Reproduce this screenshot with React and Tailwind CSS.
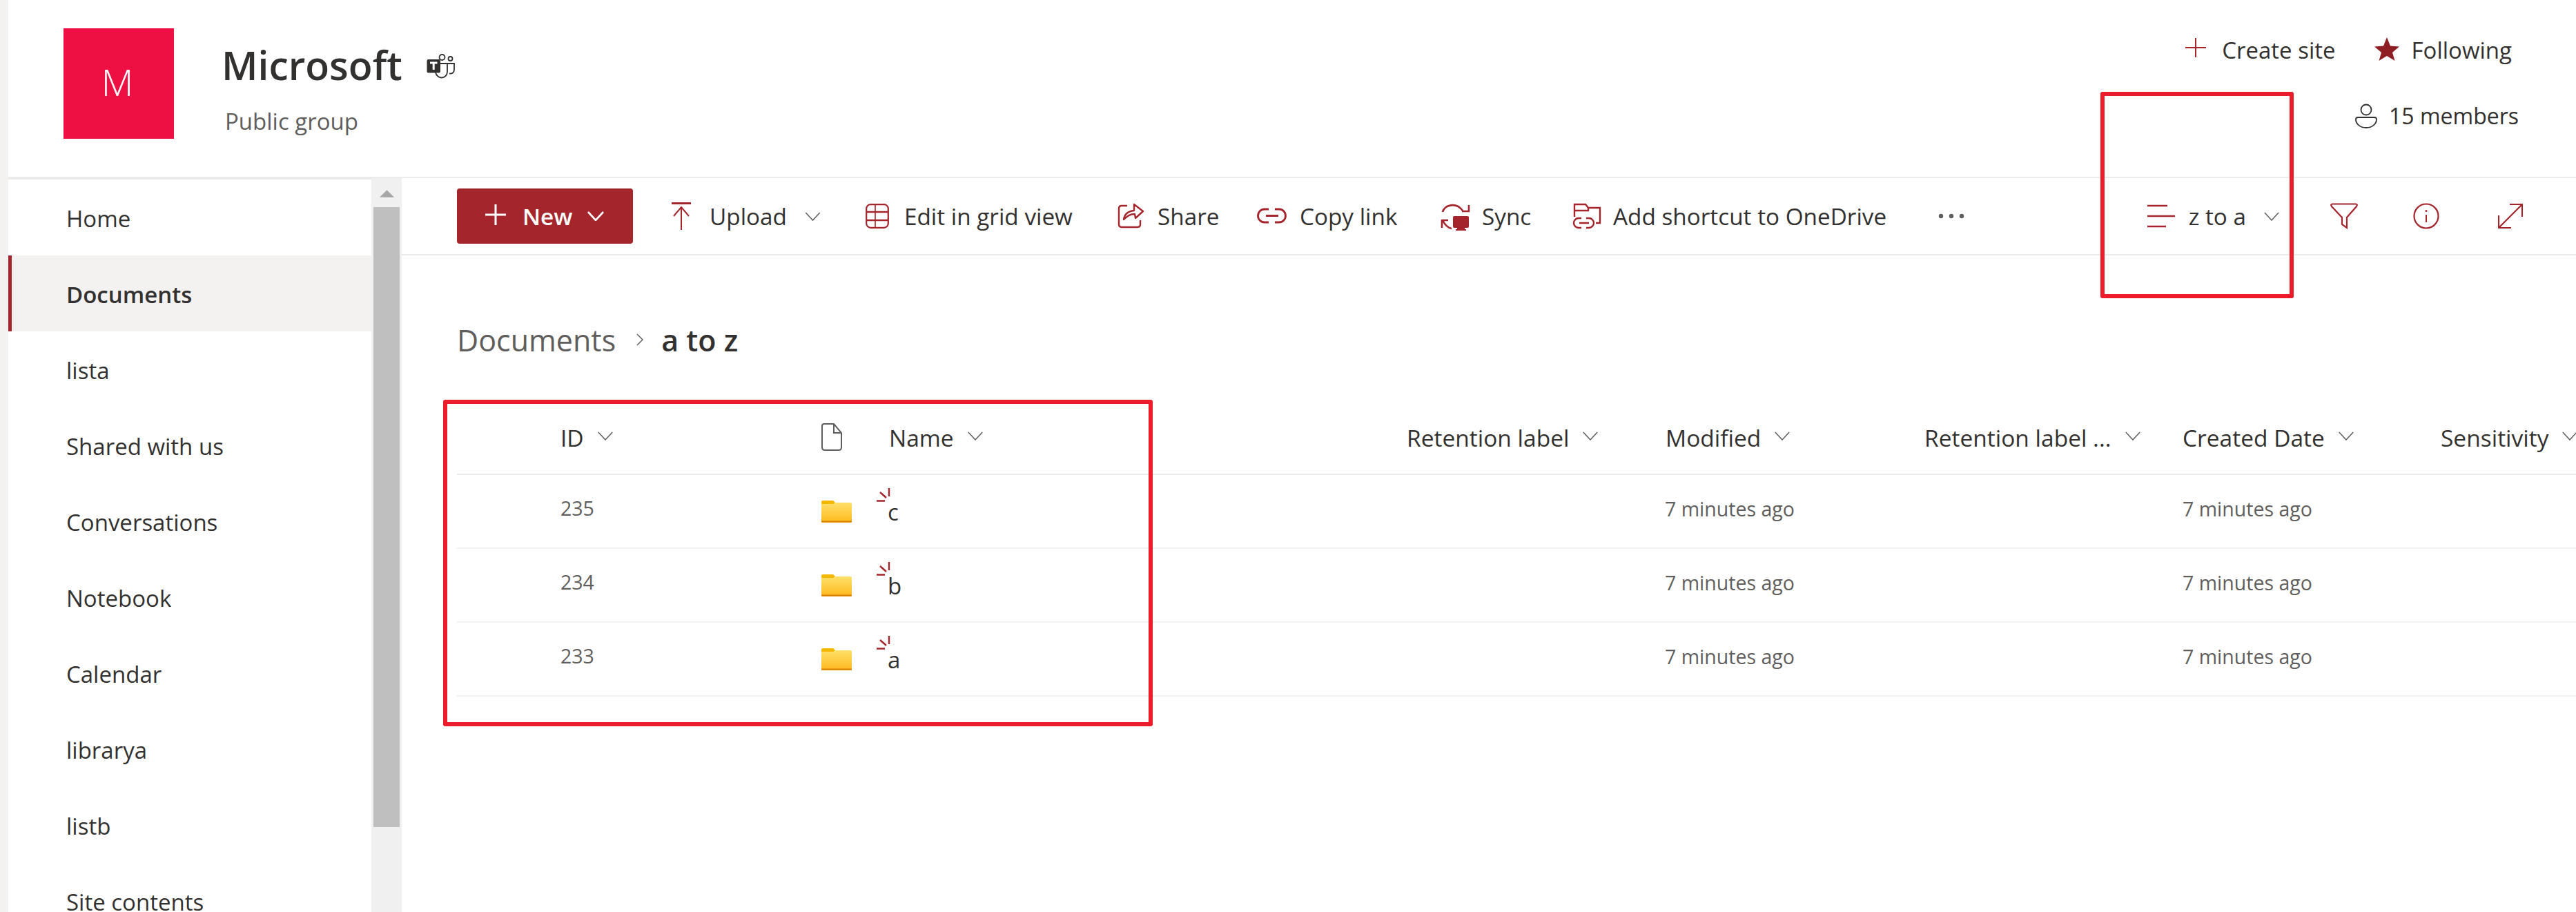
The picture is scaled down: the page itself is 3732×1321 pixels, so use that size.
import React from "react";

const RED = "#a4262c";

const Chevron = ({ className = "", color = "#605e5c", width = "1.6" }) => (
  <svg viewBox="0 0 24 14" className={className} fill="none" stroke={color} strokeWidth={width}>
    <path d="M1 1 L12 13 L23 1" />
  </svg>
);

const UploadIcon = () => (
  <svg viewBox="0 0 28 40" className="w-[28px] h-[40px] shrink-0" fill="none" stroke={RED} strokeWidth="2">
    <path d="M0 1.5 H28" strokeWidth="3" />
    <path d="M14 40 V7 M3 20 L14 7 L25 20" />
  </svg>
);
const GridIcon = () => (
  <svg viewBox="0 0 34 36" className="w-[34px] h-[36px] shrink-0" fill="none" stroke={RED} strokeWidth="2.2">
    <rect x="1.2" y="1.2" width="31.6" height="33.6" rx="6" />
    <path d="M1 12 H33 M1 24 H33" strokeWidth="2.6" />
    <path d="M14 1 V35" strokeWidth="1.6" />
  </svg>
);
const ShareIcon = () => (
  <svg viewBox="18 14 40 40" className="w-[40px] h-[40px] shrink-0" fill="none" stroke={RED} strokeWidth="2.4">
    <path d="M32 19 H24 Q20 19 20 23 V46 Q20 50 24 50 H47 Q51 50 51 46 V40" />
    <path d="M27 39 C28 31 33 27 42 26 V17 L55 27 L44 37 L43 31 C36 31 32 34 27 39 Z" strokeLinejoin="round" />
  </svg>
);
const LinkIcon = () => (
  <svg viewBox="222 18 44 28" className="w-[44px] h-[28px] shrink-0" fill="none" stroke={RED} strokeWidth="2.8">
    <path d="M239 22 H233 a9.5 9.5 0 0 0 0 19 H239 M248 22 H254 a9.5 9.5 0 0 1 0 19 H248 M235 31.5 H253" />
  </svg>
);
const SyncIcon = () => (
  <svg viewBox="16 12 44 42" className="w-[44px] h-[42px] shrink-0" fill="none" stroke={RED} strokeWidth="2.6">
    <path d="M19 27 C22 17 38 12 48 25 M57 17 V26 H47" />
    <path d="M18 38 V50 M18 39 H27 M19 39 C22 45 26 50 32 51" />
    <rect x="34" y="33" width="23" height="17" rx="2" fill={RED} stroke="none" />
    <path d="M40 50 H51 V52 H40 Z M38 52 H53 V54 H38 Z" fill={RED} stroke="none" />
  </svg>
);
const ShortcutIcon = () => (
  <svg viewBox="205 14 44 40" className="w-[44px] h-[40px] shrink-0" fill="none" stroke={RED} strokeWidth="2.4">
    <path d="M209 35 V17 H225 L229 22 H246 V44 H240 M209 26 H229 L229 22" />
    <path d="M219 37 H215 a7 7 0 0 0 0 14 H219 M226 37 H230 a7 7 0 0 1 0 14 H226 M216 44 H230" />
  </svg>
);
const Dots = () => (
  <svg viewBox="0 0 38 8" className="w-[38px] h-[8px] shrink-0" fill="#605e5c">
    <circle cx="4" cy="4" r="3.2" /><circle cx="19" cy="4" r="3.2" /><circle cx="34" cy="4" r="3.2" />
  </svg>
);
const SortIcon = () => (
  <svg viewBox="0 0 40 34" className="w-[40px] h-[34px] shrink-0" fill="none" stroke={RED} strokeWidth="2.4">
    <path d="M0 2 H29 M0 17 H40 M0 32 H27" />
  </svg>
);
const FilterIcon = () => (
  <svg viewBox="0 0 40 38" className="w-[40px] h-[38px] shrink-0" fill="none" stroke={RED} strokeWidth="2.2">
    <path d="M3 1.5 H37 Q40 2 38 5 L24 21 V36 L17 31 V21 L2 5 Q0 2 3 1.5 Z" />
  </svg>
);
const InfoIcon = () => (
  <svg viewBox="0 0 38 38" className="w-[38px] h-[38px] shrink-0" fill="none" stroke={RED} strokeWidth="2.2">
    <circle cx="19" cy="19" r="17.5" />
    <path d="M19 17 V28" strokeWidth="2" />
    <circle cx="19" cy="11.5" r="1.5" fill={RED} stroke="none" />
  </svg>
);
const ExpandIcon = () => (
  <svg viewBox="0 0 36 36" className="w-[36px] h-[36px] shrink-0" fill="none" stroke={RED} strokeWidth="2.2">
    <path d="M35 1 L1 35 M17 1 H35 V19 M1 17 V35 H19" />
  </svg>
);
const TeamsIcon = () => (
  <svg viewBox="15 14 45 40" className="w-[45px] h-[40px] shrink-0" fill="none" stroke="#323130" strokeWidth="1.8">
    <circle cx="39.5" cy="21" r="4" />
    <circle cx="51.5" cy="23" r="3" />
    <path d="M36 30 H47 V42 C47 47 43 50.5 39 50.5 C35 50.5 31 47.5 30 43" />
    <path d="M47 30 H57 V39 C57 43 54 45 50 44.5" />
    <rect x="17.5" y="24" width="19.5" height="19.5" rx="2" fill="#323130" stroke="none" />
    <path d="M22 29 H32.5 M27.2 29 V39" stroke="#fff" strokeWidth="3" />
  </svg>
);
const FileIcon = () => (
  <svg viewBox="0 0 30 40" className="w-[30px] h-[40px]" fill="none" stroke="#605e5c" strokeWidth="2">
    <path d="M4 1 H18 L29 14 V35 Q29 39 25 39 H5 Q1 39 1 35 V4 Q1 1 4 1 Z M18 1 V14 H29" />
  </svg>
);
const FolderIcon = () => (
  <svg viewBox="0 0 44 32" className="w-[44px] h-[32px] shrink-0">
    <defs>
      <linearGradient id="fg" x1="0" y1="0" x2="0" y2="1">
        <stop offset="0" stopColor="#ffe06a" />
        <stop offset="1" stopColor="#ffb81c" />
      </linearGradient>
    </defs>
    <path d="M2 0 H17 L20 3 L17 6 H0 V2 Q0 0 2 0 Z" fill="#f5b800" />
    <path d="M0 5 H17 L20 3 H42 Q44 3 44 5 V30 Q44 32 42 32 H2 Q0 32 0 30 Z" fill="url(#fg)" />
    <path d="M0 30.5 H44" stroke="#d67f00" strokeWidth="2" />
  </svg>
);
const Sparkle = () => (
  <svg viewBox="0 0 20 20" className="absolute left-[-18px] top-[19px] w-[20px] h-[20px]" fill="none" stroke={RED} strokeWidth="2.4">
    <path d="M0 18.5 H12 M5 6 L14 14 M18 0 V12" />
  </svg>
);

const Head = ({ label }) => (
  <div className="flex items-center text-[33.5px] text-[#323130] font-medium whitespace-nowrap mt-[3px]">
    <span>{label}</span>
    <Chevron className="w-[24px] h-[13px] shrink-0 ml-[19px] -mt-[6px]" />
  </div>
);

const cols = "grid grid-cols-[150px_378px_98px_750px_375px_375px_374px_374px_200px]";

const Row = ({ id, name }) => (
  <div className={`${cols} h-[107px] items-center border-b-2 border-[#f3f2f1] text-[28.5px] text-[#605e5c]`}>
    <div />
    <div className="-mt-[8px]">{id}</div>
    <FolderIcon />
    <div className="relative self-stretch flex items-center">
      <Sparkle />
      <span className="text-[33px] text-[#323130] mt-[3px] -ml-[2px]">{name}</span>
    </div>
    <div />
    <div className="-mt-[7px] -ml-[1px]">7 minutes ago</div>
    <div />
    <div className="-mt-[7px]">7 minutes ago</div>
    <div />
  </div>
);

const nav = ["Home", "Documents", "lista", "Shared with us", "Conversations", "Notebook", "Calendar", "librarya", "listb", "Site contents"];

export default function App() {
  return (
    <div className="relative flex w-[3732px] h-[1321px] overflow-hidden bg-white font-['Open_Sans','Noto_Sans',sans-serif]">
      <div className="w-[12px] shrink-0 bg-[#f3f2f1]" />
      <div className="flex-1 flex flex-col min-w-0">
        <header className="h-[258px] shrink-0 border-b-2 border-[#edebe9] flex justify-between pl-[80px] pt-[41px]">
          <div className="flex">
            <div className="w-[160px] h-[160px] bg-[#ee1043] flex items-center justify-center text-white text-[54px] font-light pb-[6px] pr-[4px]">M</div>
            <div className="ml-[69px] flex flex-col">
              <div className="flex items-center h-[72px] mt-[17px]">
                <span className="text-[57px] font-semibold text-[#323130] leading-none">Microsoft</span>
                <span className="ml-[33px] mt-[4px]"><TeamsIcon /></span>
              </div>
              <span className="text-[33px] text-[#605e5c] mt-[29px] ml-[5px] leading-none">Public group</span>
            </div>
          </div>
          <div className="flex flex-col items-end text-[33px] text-[#323130] pt-[10px]">
            <div className="flex items-center h-[44px] pr-[93px]">
              <svg viewBox="0 0 30 28" className="w-[30px] h-[28px] -mt-[8px]" fill="none" stroke={RED} strokeWidth="2"><path d="M0 14 H30 M15 0 V28" /></svg>
              <span className="ml-[23px]">Create site</span>
              <svg viewBox="0 0 36 34" className="w-[36px] h-[34px] ml-[56px] -mt-[4px]" fill="#8f1d24"><path d="M18 0 L23 12.5 L36 13.5 L26 22 L29.5 34 L18 27 L6.5 34 L10 22 L0 13.5 L13 12.5 Z" /></svg>
              <span className="ml-[18px]">Following</span>
            </div>
            <div className="flex items-center h-[44px] mt-[51px] pr-[83px]">
              <svg viewBox="0 0 32 36" className="w-[32px] h-[36px]" fill="none" stroke="#323130" strokeWidth="1.8"><circle cx="16" cy="9" r="7.5" /><path d="M4 20 H28 Q31 20 31 23 C31 30 24 35 16 35 C8 35 1 30 1 23 Q1 20 4 20 Z" /></svg>
              <span className="ml-[17px] text-[32px]">15 members</span>
            </div>
          </div>
        </header>

        <div className="flex-1 flex min-h-0">
          <nav className="w-[526px] shrink-0 border-t-2 border-[#edebe9] flex flex-col text-[33px] text-[#323130]">
            {nav.map((n, i) => (
              <div
                key={n}
                className={i === 1
                  ? "h-[110px] shrink-0 flex items-center pl-[79px] pt-[3px] bg-[#f3f2f1] border-l-[5px] border-[#a4262c] font-semibold"
                  : "h-[110px] shrink-0 flex items-center pl-[84px] pt-[3px]"}
              >
                {n}
              </div>
            ))}
          </nav>

          <div className="w-[44px] shrink-0 bg-[#f0f0f0] flex flex-col items-center pt-[17px]">
            <svg viewBox="0 0 22 11" className="w-[21px] h-[11px]" fill="#a6a6a6"><path d="M11 0 L22 11 H0 Z" /></svg>
            <div className="w-[38px] h-[898px] bg-[#bfbfbf] mt-[14px] shrink-0" />
          </div>

          <main className="flex-1 min-w-0 flex flex-col">
            <div className="h-[112px] shrink-0 border-b-2 border-[#edebe9] flex items-center pl-[80px] pr-[77px] text-[33.3px] text-[#323130]">
              <button className="w-[255px] h-[80px] bg-[#a4262c] rounded-[4px] flex items-center text-white font-semibold pl-[41px] shrink-0">
                <svg viewBox="0 0 30 30" className="w-[30px] h-[30px] -mt-[4px]" fill="none" stroke="#fff" strokeWidth="3"><path d="M0 15 H30 M15 0 V30" /></svg>
                <span className="ml-[24px] mt-[2px]">New</span>
                <Chevron className="w-[26px] h-[14px] ml-[21px]" color="#fff" width="2.6" />
              </button>
              <div className="w-[56px] shrink-0" />
              <div className="w-[281px] shrink-0 flex items-center">
                <UploadIcon /><span className="ml-[27px] mt-[2px]">Upload</span>
                <Chevron className="w-[23px] h-[13px] ml-[26px]" />
              </div>
              <div className="w-[365px] shrink-0 flex items-center">
                <GridIcon /><span className="ml-[22px] mt-[2px] whitespace-nowrap">Edit in grid view</span>
              </div>
              <div className="w-[202px] shrink-0 flex items-center">
                <ShareIcon /><span className="ml-[18px] mt-[2px]">Share</span>
              </div>
              <div className="w-[266px] shrink-0 flex items-center">
                <LinkIcon /><span className="ml-[18px] mt-[2px] whitespace-nowrap">Copy link</span>
              </div>
              <div className="w-[190px] shrink-0 flex items-center">
                <SyncIcon /><span className="ml-[16px] mt-[2px]">Sync</span>
              </div>
              <div className="w-[531px] shrink-0 flex items-center">
                <ShortcutIcon /><span className="ml-[16px] mt-[2px] whitespace-nowrap">Add shortcut to OneDrive</span>
              </div>
              <Dots />
              <div className="ml-auto flex items-center">
                <SortIcon />
                <span className="ml-[20px] mt-[2px] whitespace-nowrap">z to a</span>
                <Chevron className="w-[22px] h-[13px] ml-[26px]" />
                <div className="ml-[74px]"><FilterIcon /></div>
                <div className="ml-[80px]"><InfoIcon /></div>
                <div className="ml-[85px]"><ExpandIcon /></div>
              </div>
            </div>

            <div className="h-[210px] shrink-0 flex items-center pl-[80px] pt-[36px] text-[43px] whitespace-nowrap">
              <span className="text-[#605e5c]">Documents</span>
              <svg viewBox="0 0 10 18" className="w-[10px] h-[18px] ml-[30px] -mt-[2px]" fill="none" stroke="#605e5c" strokeWidth="1.5"><path d="M1 1 L9 9 L1 17" /></svg>
              <span className="ml-[26px] font-semibold text-[#323130]">a to z</span>
            </div>

            <div className="ml-[80px] w-[3070px] overflow-hidden">
              <div className={`${cols} h-[108px] items-center border-b-2 border-[#edebe9]`}>
                <div />
                <Head label="ID" />
                <FileIcon />
                <Head label="Name" />
                <Head label="Retention label" />
                <Head label="Modified" />
                <Head label="Retention label ..." />
                <Head label="Created Date" />
                <Head label="Sensitivity" />
              </div>
              <Row id="235" name="c" />
              <Row id="234" name="b" />
              <Row id="233" name="a" />
            </div>
          </main>
        </div>
      </div>

      <div className="absolute left-[3043px] top-[133px] w-[280px] h-[299px] border-[6px] border-[#ed1c2b] rounded-[3px]" />
      <div className="absolute left-[642px] top-[579px] w-[1028px] h-[473px] border-[6px] border-[#ed1c2b] rounded-[3px]" />
    </div>
  );
}
